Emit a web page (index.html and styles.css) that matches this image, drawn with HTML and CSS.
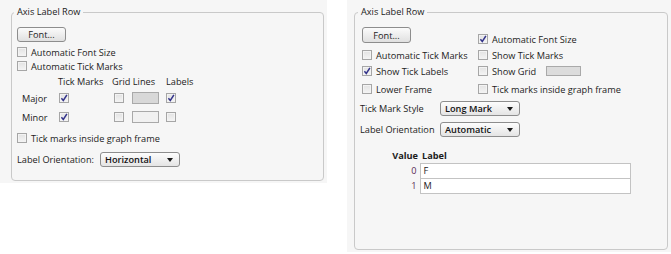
FILE: index.html
```html
<!DOCTYPE html>
<html>
<head>
<meta charset="utf-8">
<link rel="stylesheet" href="styles.css">
</head>
<body>
<div class="page">
  <section class="panel panel-left">
    <fieldset class="group group-left">
      <legend>Axis Label Row</legend>
      <div class="body body-left">
        <button class="btn">Font...</button>
        <div class="cb cb-first"><span class="box"></span>Automatic Font Size</div>
        <div class="cb"><span class="box"></span>Automatic Tick Marks</div>
        <div class="tick-grid">
          <span></span>
          <span class="hdr">Tick Marks</span>
          <span class="hdr">Grid Lines</span>
          <span class="hdr">Labels</span>

          <span class="rowlbl">Major</span>
          <span class="cell"><span class="box checked tick-box"><svg viewBox="0 0 8 8" width="8" height="8"><path d="M1.4 4.3 L3.3 6.5 L6.9 0.9" fill="none" stroke="#33338a" stroke-width="1.5"/></svg></span></span>
          <span class="cell"><span class="box grid-box"></span><span class="swatch swatch-major"></span></span>
          <span class="cell"><span class="box checked"><svg viewBox="0 0 8 8" width="8" height="8"><path d="M1.4 4.3 L3.3 6.5 L6.9 0.9" fill="none" stroke="#33338a" stroke-width="1.5"/></svg></span></span>

          <span class="rowlbl">Minor</span>
          <span class="cell"><span class="box checked tick-box"><svg viewBox="0 0 8 8" width="8" height="8"><path d="M1.4 4.3 L3.3 6.5 L6.9 0.9" fill="none" stroke="#33338a" stroke-width="1.5"/></svg></span></span>
          <span class="cell"><span class="box grid-box"></span><span class="swatch swatch-minor"></span></span>
          <span class="cell"><span class="box"></span></span>
        </div>
        <div class="cb cb-inside"><span class="box"></span>Tick marks inside graph frame</div>
        <div class="field field-left">
          <span class="field-label label-left">Label Orientation:</span>
          <span class="select">Horizontal<span class="arrow"></span></span>
        </div>
      </div>
    </fieldset>
  </section>

  <section class="panel panel-right">
    <fieldset class="group group-right">
      <legend>Axis Label Row</legend>
      <div class="body body-right">
        <div class="opt-grid">
          <button class="btn">Font...</button>
          <div class="cb cb-autofont"><span class="box checked"><svg viewBox="0 0 8 8" width="8" height="8"><path d="M1.4 4.3 L3.3 6.5 L6.9 0.9" fill="none" stroke="#33338a" stroke-width="1.5"/></svg></span>Automatic Font Size</div>
          <div class="cb"><span class="box"></span>Automatic Tick Marks</div>
          <div class="cb"><span class="box"></span>Show Tick Marks</div>
          <div class="cb"><span class="box checked"><svg viewBox="0 0 8 8" width="8" height="8"><path d="M1.4 4.3 L3.3 6.5 L6.9 0.9" fill="none" stroke="#33338a" stroke-width="1.5"/></svg></span>Show Tick Labels</div>
          <div class="cb"><span class="box"></span>Show Grid<span class="swatch swatch-grid"></span></div>
          <div class="cb"><span class="box"></span>Lower Frame</div>
          <div class="cb"><span class="box"></span>Tick marks inside graph frame</div>
        </div>
        <div class="field field-style">
          <span class="field-label label-right">Tick Mark Style</span>
          <span class="select">Long Mark<span class="arrow"></span></span>
        </div>
        <div class="field field-orient">
          <span class="field-label label-right">Label Orientation</span>
          <span class="select">Automatic<span class="arrow"></span></span>
        </div>
        <table class="labels">
          <thead>
            <tr><th class="col-value">Value</th><th class="col-label">Label</th></tr>
          </thead>
          <tbody>
            <tr><td class="val">0</td><td class="lbl">F</td></tr>
            <tr><td class="val">1</td><td class="lbl">M</td></tr>
          </tbody>
        </table>
      </div>
    </fieldset>
  </section>
</div>
</body>
</html>
```

FILE: styles.css
```css
* { box-sizing: border-box; }

html, body {
  margin: 0;
  padding: 0;
  background: #ffffff;
}

body {
  font-family: "Open Sans", "Noto Sans", sans-serif;
  font-size: 9.2px;
  color: #1c1c1c;
  width: 671px;
  height: 254px;
  overflow: hidden;
}

.page {
  display: flex;
  align-items: flex-start;
  gap: 20px;
}

.panel {
  background: #f6f6f6;
  padding-top: 6px;
}

.panel-left {
  width: 327px;
  height: 183px;
  padding-left: 11px;
}

.panel-right {
  width: 324px;
  height: 252px;
  padding-left: 7px;
}

.group {
  margin: 0;
  padding: 0;
  min-width: 0;
  border: 1px solid #c9c9c9;
  border-radius: 4px;
}

.group-left {
  width: 313px;
  height: 175px;
}

.group-right {
  width: 314px;
  height: 244px;
}

.group legend {
  padding: 0 3px;
  line-height: 12px;
  height: 12px;
  color: #1c1c1c;
}

.group-left legend { margin-left: 2px; }
.group-right legend { margin-left: 3px; }

.body {
  display: flex;
  flex-direction: column;
  align-items: flex-start;
  padding-top: 9px;
}

.body-left { padding-left: 5px; }
.body-right { padding-left: 7px; }

.btn {
  width: 49px;
  height: 16px;
  margin: 0;
  padding: 0;
  font: inherit;
  color: #1c1c1c;
  border: 1px solid #8d8d8d;
  border-radius: 3px;
  background: linear-gradient(#fbfbfb, #e0e0e0);
  line-height: 13px;
}

.body-left .btn { height: 15px; }

.cb {
  display: flex;
  align-items: center;
  gap: 4px;
  height: 14px;
  white-space: nowrap;
}

.cb-first { margin-top: 3px; }

.box {
  display: inline-flex;
  align-items: center;
  justify-content: center;
  flex: none;
  width: 10px;
  height: 10px;
  border: 1px solid #a6a6a6;
  background: linear-gradient(#e2e2e2, #f4f4f4);
  box-shadow: inset 0 0 0 1px #f3f3f3;
}

.box svg { display: block; }

.tick-grid {
  display: grid;
  grid-template-columns: 36px 54px 54px auto;
  grid-template-rows: 14px 20px 18px;
  align-items: center;
  margin-top: 1px;
  margin-left: 5px;
}

.hdr, .rowlbl { white-space: nowrap; }

.cell {
  display: flex;
  align-items: center;
}

.tick-box { margin-left: 1px; }
.grid-box { margin-left: 2px; }

.swatch {
  display: inline-block;
  flex: none;
  border: 1px solid #a9a9a9;
}

.swatch-major {
  width: 27px;
  height: 12px;
  margin-left: 8px;
  background: #d8d8d8;
}

.swatch-minor {
  width: 27px;
  height: 12px;
  margin-left: 8px;
  background: #f1f1f1;
}

.swatch-grid {
  width: 35px;
  height: 10px;
  margin-left: 6px;
  background: #dcdcdc;
}

.cb-inside { margin-top: 5px; }

.field {
  display: flex;
  align-items: center;
}

.field-left { margin-top: 7px; }

.field-label { white-space: nowrap; }

.label-left { width: 83px; }
.label-right { width: 78px; margin-left: -2px; padding-right: 0; }
.field-style .select, .field-orient .select { margin-left: 2px; }

.select {
  position: relative;
  display: inline-flex;
  align-items: center;
  width: 80px;
  height: 15px;
  padding-left: 4px;
  border: 1px solid #8d8d8d;
  border-radius: 3px;
  background: linear-gradient(#fdfdfd, #e4e4e4);
  color: #111;
  font-weight: 600;
}

.arrow {
  position: absolute;
  right: 6px;
  top: 5px;
  width: 0;
  height: 0;
  border-left: 3px solid transparent;
  border-right: 3px solid transparent;
  border-top: 4px solid #1a1a1a;
}

.opt-grid {
  display: grid;
  grid-template-columns: 116px auto;
  grid-template-rows: 20px 16px 16px 20px;
  align-items: center;
}

.opt-grid .btn { align-self: start; }

.cb-autofont {
  align-self: start;
  margin-top: 5px;
}

.field-style { margin-top: 2px; }
.field-orient { margin-top: 6px; }

.labels {
  margin-top: 12px;
  margin-left: 26px;
  border-collapse: collapse;
  font-size: 9.2px;
}

.labels th {
  font-weight: 700;
  height: 14px;
  padding: 0;
  line-height: 12px;
  vertical-align: middle;
}

.col-value {
  width: 32px;
  text-align: right;
  padding-right: 2px !important;
}

.col-label {
  width: 210px;
  text-align: left;
  padding-left: 2px !important;
}

.labels td {
  height: 15px;
  padding: 0;
  line-height: 12px;
}

.val {
  text-align: right;
  padding-right: 3px !important;
  color: #5a2a55;
}

.lbl {
  background: #ffffff;
  border: 1px solid #c3c3c3;
  padding-left: 3px !important;
}
```
